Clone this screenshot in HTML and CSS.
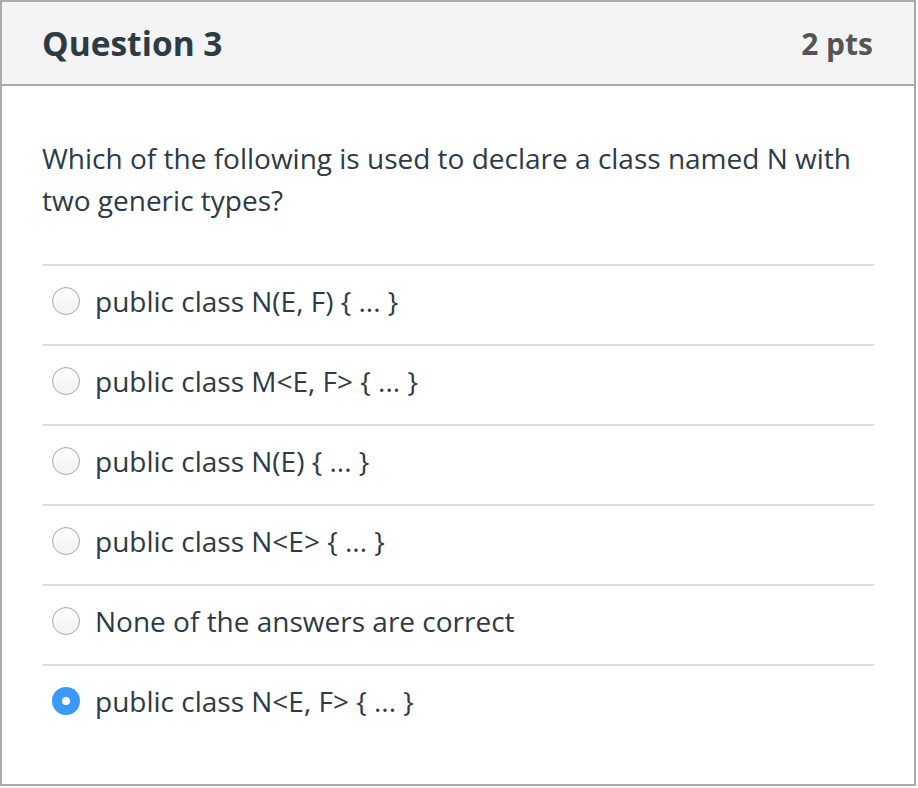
FILE: index.html
```html
<!DOCTYPE html>
<html>
<head>
<meta charset="utf-8">
<link rel="stylesheet" href="styles.css">
</head>
<body>
<div class="question">
  <div class="header">
    <h2 class="title">Question 3</h2>
    <span class="pts">2 pts</span>
  </div>
  <div class="body">
    <p class="text">Which of the following is used to declare a class named N with two generic types?</p>
    <ul class="answers">
      <li class="answer"><span class="radio"></span><span class="label">public class N(E, F) { ... }</span></li>
      <li class="answer"><span class="radio"></span><span class="label">public class M&lt;E, F&gt; { ... }</span></li>
      <li class="answer"><span class="radio"></span><span class="label">public class N(E) { ... }</span></li>
      <li class="answer"><span class="radio"></span><span class="label">public class N&lt;E&gt; { ... }</span></li>
      <li class="answer"><span class="radio"></span><span class="label">None of the answers are correct</span></li>
      <li class="answer"><span class="radio checked"></span><span class="label">public class N&lt;E, F&gt; { ... }</span></li>
    </ul>
  </div>
</div>
</body>
</html>
```
FILE: styles.css
```css
html, body {
  margin: 0;
  padding: 0;
  background: #fff;
}
body {
  font-family: "Open Sans", "Liberation Sans", sans-serif;
  color: #2d3b45;
}
.question {
  width: 916px;
  height: 786px;
  box-sizing: border-box;
  border: 2px solid #aaaaaa;
  background: #fff;
}
.header {
  height: 82px;
  background: #f4f4f4;
  border-bottom: 2px solid #aaaaaa;
  display: flex;
  align-items: center;
  justify-content: space-between;
  padding: 0 41px 0 40px;
}
.title {
  margin: 0;
  font-size: 33.5px;
  font-weight: 700;
  color: #2d3b45;
}
.pts {
  font-size: 30px;
  font-weight: 700;
  color: #555555;
}
.body {
  padding: 51px 40px 0 40px;
}
.text {
  margin: 0 0 43px 0;
  font-size: 28px;
  line-height: 42px;
}
.answers {
  list-style: none;
  margin: 0;
  padding: 0;
}
.answer {
  border-top: 2px solid #dddddd;
  display: flex;
  align-items: center;
  padding: 14px 0 22px 10px;
  font-size: 28px;
  line-height: 42px;
}
.radio {
  width: 28px;
  height: 28px;
  box-sizing: border-box;
  border-radius: 50%;
  border: 1px solid #a9a9a9;
  background: linear-gradient(#ffffff, #f2f2f2);
  box-shadow: inset 0 1px 1px rgba(0,0,0,0.06);
  flex: none;
  margin-right: 15px;
  position: relative;
}
.radio.checked {
  border: none;
  background: #3b99fc;
  box-shadow: none;
}
.radio.checked::after {
  content: "";
  position: absolute;
  left: 10px;
  top: 10px;
  width: 8px;
  height: 8px;
  border-radius: 50%;
  background: #fff;
}
```
